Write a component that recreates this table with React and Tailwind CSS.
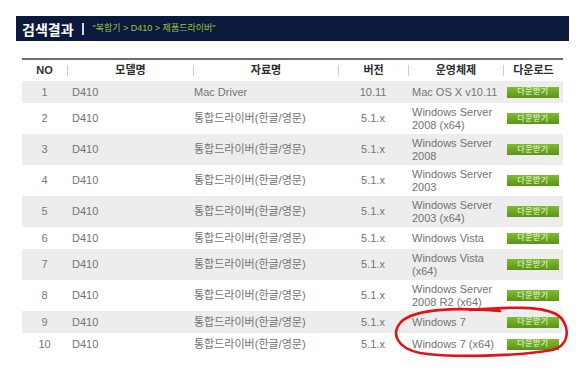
const rows = [
  { no: 1, name: "Mac Driver", ver: "10.11", os: ["Mac OS X v10.11"] },
  { no: 2, name: "통합드라이버(한글/영문)", ver: "5.1.x", os: ["Windows Server", "2008 (x64)"] },
  { no: 3, name: "통합드라이버(한글/영문)", ver: "5.1.x", os: ["Windows Server", "2008"] },
  { no: 4, name: "통합드라이버(한글/영문)", ver: "5.1.x", os: ["Windows Server", "2003"] },
  { no: 5, name: "통합드라이버(한글/영문)", ver: "5.1.x", os: ["Windows Server", "2003 (x64)"] },
  { no: 6, name: "통합드라이버(한글/영문)", ver: "5.1.x", os: ["Windows Vista"] },
  { no: 7, name: "통합드라이버(한글/영문)", ver: "5.1.x", os: ["Windows Vista", "(x64)"] },
  { no: 8, name: "통합드라이버(한글/영문)", ver: "5.1.x", os: ["Windows Server", "2008 R2 (x64)"] },
  { no: 9, name: "통합드라이버(한글/영문)", ver: "5.1.x", os: ["Windows 7"] },
  { no: 10, name: "통합드라이버(한글/영문)", ver: "5.1.x", os: ["Windows 7 (x64)"] },
];

const cols = "grid grid-cols-[45px_126px_145px_70px_95px_60px]";

function HeadCell({ label, sep = true }) {
  return (
    <div className="flex items-center h-full">
      {sep && <span className="w-px h-[11px] bg-[#cfcfcf]" />}
      <span className="flex-1 text-center">{label}</span>
    </div>
  );
}

function DownloadButton() {
  return (
    <div className="w-[52px] h-[11px] flex items-center justify-center bg-gradient-to-b from-[#80bd2e] to-[#5b9417] text-[#f4f9ea] text-[8px] leading-none tracking-[0.5px]">
      다운받기
    </div>
  );
}

export default function App() {
  return (
    <div
      className="relative w-[583px] h-[372px] bg-white overflow-hidden"
      style={{ fontFamily: '"Liberation Sans", "Noto Sans CJK KR", sans-serif' }}
    >
      <div className="pt-[16px] pl-[16px]">
        <div className="w-[553px] h-[25px] bg-[#0b1a3c] flex items-center pl-[6px]">
          <span className="text-white font-bold text-[14px] leading-none" style={{ fontFamily: '"Noto Sans CJK KR", sans-serif' }}>
            검색결과
          </span>
          <span className="ml-[8px] w-[2px] h-[12px] bg-[#d5d9e2]" />
          <span className="ml-[9px] text-[#9cc440] text-[9px] leading-none">
            "복합기 &gt; D410 &gt; 제품드라이버"
          </span>
        </div>
      </div>

      <div className="ml-[22px] mt-[17px] w-[541px] border-t-2 border-[#6e6e6e]">
        <div className={`${cols} h-[21px] text-[11px] font-bold text-[#2e2e2e]`}>
          <HeadCell label="NO" sep={false} />
          <HeadCell label="모델명" />
          <HeadCell label="자료명" />
          <HeadCell label="버전" />
          <HeadCell label="운영체제" />
          <HeadCell label="다운로드" />
        </div>

        {rows.map((r) => (
          <div
            key={r.no}
            className={`${cols} min-h-[22px] py-[3px] items-center text-[11px] leading-[12.5px] text-[#737373] ${
              r.no % 2 === 1 ? "bg-[#ededed]" : "bg-white"
            }`}
          >
            <div className="text-center text-[#7a7a7a]">{r.no}</div>
            <div className="pl-[5px]">D410</div>
            <div className="pl-[1px]">{r.name}</div>
            <div className="text-center">{r.ver}</div>
            <div className="pl-[4px]">
              {r.os.map((l) => (
                <div key={l}>{l}</div>
              ))}
            </div>
            <div className="flex justify-center">
              <DownloadButton />
            </div>
          </div>
        ))}
      </div>

      <svg className="absolute inset-0 pointer-events-none" width="583" height="372" viewBox="0 0 583 372">
        <path
          d="M500 311 C455 307 414 309 401 322 C391 333 396 348 420 353 C452 358 520 356 552 350 C572 345 570 322 556 314 C540 306 510 307 470 310"
          fill="none"
          stroke="#e3121a"
          strokeWidth="2.6"
          strokeLinecap="round"
        />
      </svg>
    </div>
  );
}
